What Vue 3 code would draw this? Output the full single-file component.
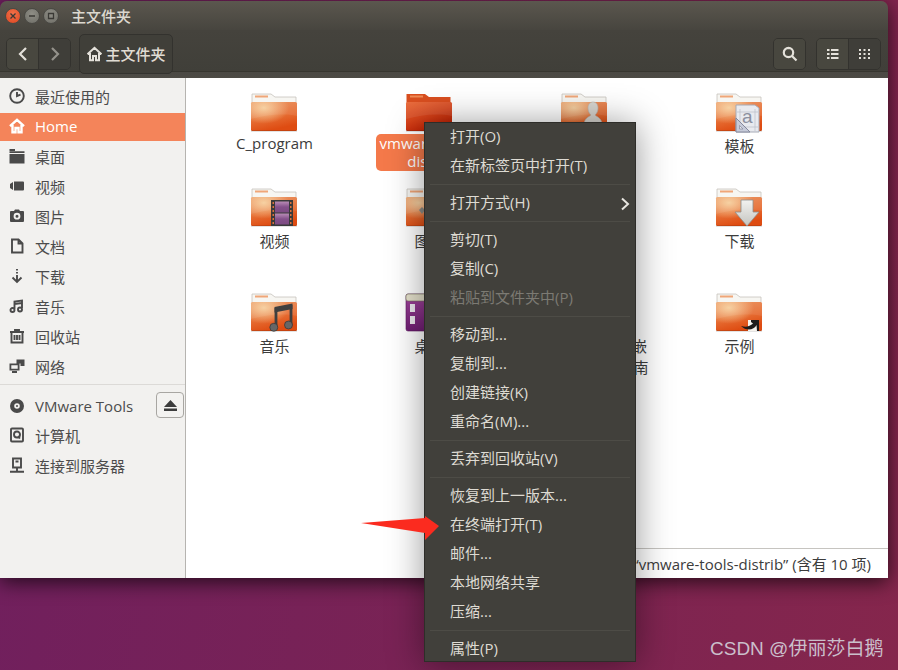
<script setup>
const sideTop = [
  { n: '最近使用的', s: 'M8 1.2a6.8 6.8 0 1 0 0 13.6 6.8 6.8 0 0 0 0-13.6z M8 4v4l3.5-1.4' },
  { n: 'Home', sel: true, s: 'M1 8.2 8 1.8l7 6.4 M3.5 7v7.2h3V10h3v4.2h3V7' },
  { n: '桌面', f: 'M0.5 1H6V3H0.5z M6 3.2H15.5V5H0.5V3.2z M0.5 6H15.5V15.5H0.5z' },
  { n: '视频', f: 'M1 6 4 4v8L1 10z M5 3.5h9a1 1 0 0 1 1 1v7a1 1 0 0 1-1 1H5z' },
  { n: '图片', f: 'M5 3 6 1.5h4L11 3h3a1 1 0 0 1 1 1v9a1 1 0 0 1-1 1H2a1 1 0 0 1-1-1V4a1 1 0 0 1 1-1z M8 4.8a3.4 3.4 0 1 0 0 6.8 3.4 3.4 0 0 0 0-6.8z M8 6.7a1.5 1.5 0 1 1 0 3 1.5 1.5 0 0 1 0-3z' },
  { n: '文档', s: 'M3 1.5h6.5L13.500 5.500v9H3z M9.500 1.500v4h4' },
  { n: '下载', s: 'M8 1v1.5M8 4v1.500M8 7v6 M3.500 9.500 8 14l4.500-4.500' },
  { n: '音乐', s: 'M5.500 11V3.500L13 2.500V10 M3.500 10a2 2 0 1 0 0 4 2 2 0 0 0 0-4z M11 9.500a2 2 0 1 0 0 4 2 2 0 0 0 0-4z M5.500 6 13 5' },
  { n: '回收站', s: 'M1 4h14 M6 4V2h4v2 M2.500 4v10.500h11V4 M5.500 7v5M8 7v5M10.500 7v5' },
  { n: '网络', f: 'M0.500 5.500h10v7h-10z M2.300 7.200v3.600h6.400V7.200z M3 13h5v2H3z M7.500 1.500h8v6.500h-4V5.500h-4z' }
]
const sideBottom = [
  { n: 'VMware Tools', eject: true, f: 'M8 1a7 7 0 1 0 0 14A7 7 0 0 0 8 1z M8 5.200a2.800 2.800 0 1 1 0 5.600 2.800 2.800 0 0 1 0-5.600z M8 7a1 1 0 1 0 0 2 1 1 0 0 0 0-2z' },
  { n: '计算机', s: 'M3 1.500h10a1 1 0 0 1 1 1v11a1 1 0 0 1-1 1H3a1 1 0 0 1-1-1v-11a1 1 0 0 1 1-1z M8 4.500a3 3 0 1 0 0 6 3 3 0 0 0 0-6z M9 9l2 2.500' },
  { n: '连接到服务器', s: 'M4 1.500h8v9H4z M8 11v3 M1 14.700h14 M6.500 4.500h3' }
]
const files = [
  { n: 'C_program', latin: true },
  { n: 'vmware-tools-', n2: 'distrib', sel: true },
  { n: '公共的', o: 'person' },
  { n: '模板', o: 'template' },
  { n: '视频', o: 'film' },
  { n: '图片', o: 'picture' },
  { n: '文档', o: 'doc' },
  { n: '下载', o: 'download' },
  { n: '音乐', o: 'music' },
  { n: '桌面', o: 'desk' },
  { n: '正点原子I.MX6U嵌', n2: '入式Linux开发指南' },
  { n: '示例', o: 'link' }
]
const menu = [
  ['打开(O)', '在新标签页中打开(T)'],
  [{ t: '打开方式(H)', more: true }],
  ['剪切(T)', '复制(C)', { t: '粘贴到文件夹中(P)', off: true }],
  ['移动到...', '复制到...', '创建链接(K)', '重命名(M)...'],
  ['丢弃到回收站(V)'],
  ['恢复到上一版本...', '在终端打开(T)', '邮件...', '本地网络共享', '压缩...'],
  ['属性(P)']
]
const label = (i) => (typeof i === 'string' ? i : i.t)
</script>

<template>
  <div class="desktop">
    <svg class="defs" width="0" height="0">
      <defs>
        <linearGradient id="front" x1="0" y1="0" x2="0.35" y2="1">
          <stop offset="0" stop-color="#ea8f58" />
          <stop offset="0.6" stop-color="#e66d33" />
          <stop offset="1" stop-color="#de4c12" />
        </linearGradient>
        <radialGradient id="glow" cx="0.28" cy="0.2" r="0.55">
          <stop offset="0" stop-color="#f8d6a4" stop-opacity="0.9" />
          <stop offset="1" stop-color="#f8d6a4" stop-opacity="0" />
        </radialGradient>
        <linearGradient id="frontSel" x1="0" y1="0" x2="0.5" y2="1">
          <stop offset="0" stop-color="#e8622e" />
          <stop offset="0.55" stop-color="#d8431a" />
          <stop offset="1" stop-color="#c22204" />
        </linearGradient>
        <linearGradient id="purple" x1="0" y1="0" x2="0" y2="1">
          <stop offset="0" stop-color="#a2459d" />
          <stop offset="1" stop-color="#6f1e73" />
        </linearGradient>
        <linearGradient id="film" x1="0" y1="0" x2="0" y2="1">
          <stop offset="0" stop-color="#b98cb6" />
          <stop offset="0.5" stop-color="#84508a" />
          <stop offset="1" stop-color="#7c4a82" />
        </linearGradient>
        <linearGradient id="arrow" x1="0" y1="0" x2="0" y2="1">
          <stop offset="0" stop-color="#f2f2f0" />
          <stop offset="1" stop-color="#c4c4c0" />
        </linearGradient>
      </defs>
    </svg>

    <div class="window">
      <header class="titlebar">
        <span class="wbtn close"><svg viewBox="0 0 8 8"><path d="M1.500 1.500l5 5M6.500 1.500l-5 5" /></svg></span>
        <span class="wbtn"><svg viewBox="0 0 8 8"><path d="M1 4h6" /></svg></span>
        <span class="wbtn"><svg viewBox="0 0 8 8"><path d="M1.500 1.500h5v5h-5z" /></svg></span>
        <span class="title">主文件夹</span>
      </header>

      <div class="toolbar">
        <div class="group nav">
          <span class="seg"><svg width="12" height="16" viewBox="0 0 12 16"><path class="chev" d="M9 2 3 8l6 6" /></svg></span>
          <span class="seg pressed"><svg width="12" height="16" viewBox="0 0 12 16"><path class="chev dim" d="M3 2l6 6-6 6" /></svg></span>
        </div>
        <div class="path">
          <svg width="17" height="16" viewBox="0 0 16 16"><path class="chev thin" d="M1 8.200 8 1.800l7 6.400 M3.500 7v7.200h3V10h3v4.200h3V7" /></svg>
          <span>主文件夹</span>
        </div>
        <div class="spacer"></div>
        <div class="group search">
          <span class="seg"><svg width="16" height="16" viewBox="0 0 16 16"><path class="chev" d="M6.500 1.800a4.700 4.700 0 1 0 0 9.400 4.700 4.700 0 0 0 0-9.400z M10 10l4.500 4.500" /></svg></span>
        </div>
        <div class="group views">
          <span class="seg"><svg width="12" height="12" viewBox="0 0 12 12"><path class="solid" d="M0 1h2.500v2H0z M4 1h7.500v2H4z M0 5h2.500v2H0z M4 5h7.500v2H4z M0 9h2.500v2H0z M4 9h7.500v2H4z" /></svg></span>
          <span class="seg pressed"><svg width="12" height="12" viewBox="0 0 12 12"><path class="solid" d="M0 1h2v2H0zM4.500 1h2v2h-2zM9 1h2v2H9zM0 5h2v2H0zM4.500 5h2v2h-2zM9 5h2v2H9zM0 9h2v2H0zM4.500 9h2v2h-2zM9 9h2v2H9z" /></svg></span>
        </div>
      </div>

      <div class="body">
        <aside class="sidebar">
          <div v-for="it in sideTop" :key="it.n" class="side-item" :class="{ selected: it.sel }">
            <svg class="side-ico" width="16" height="16" viewBox="0 0 16 16">
              <path v-if="it.f" class="ifill" fill-rule="evenodd" :d="it.f" />
              <path v-if="it.s" class="istroke" :d="it.s" />
            </svg>
            <span>{{ it.n }}</span>
          </div>
          <div class="side-sep"></div>
          <div v-for="it in sideBottom" :key="it.n" class="side-item" :class="{ device: it.eject }">
            <svg class="side-ico" width="16" height="16" viewBox="0 0 16 16">
              <path v-if="it.f" class="ifill" fill-rule="evenodd" :d="it.f" />
              <path v-if="it.s" class="istroke" :d="it.s" />
            </svg>
            <span>{{ it.n }}</span>
            <button v-if="it.eject" class="eject">
              <svg width="13" height="11" viewBox="0 0 13 11"><path d="M6.500 0 13 7H0z M0 8.500h13V11H0z" fill="#3c3c3c" /></svg>
            </button>
          </div>
        </aside>

        <main class="main">
          <div class="grid">
            <div v-for="f in files" :key="f.n" class="file">
              <svg class="folder" width="48" height="40" viewBox="0 0 48 40">
                <template v-if="f.o === 'desk'">
                  <rect x="1" y="1" width="46" height="37" rx="2" fill="url(#purple)" stroke="#5a1a5e" stroke-width="0.6" />
                  <rect x="1" y="1" width="46" height="7" rx="2" fill="#e5e1cc" stroke="#77755d" stroke-width="0.6" />
                  <rect x="5" y="11" width="5" height="8" fill="#eeeaf0" />
                  <rect x="5" y="23" width="5" height="8" fill="#eeeaf0" />
                </template>
                <template v-else>
                  <path v-if="f.sel" d="M1.500 1H20l4 3h21.500v6H1.500z" fill="#d94e1f" />
                  <path v-else d="M2 1h19l4 3h21v6H2z" fill="#f7f6f2" stroke="#c6c3bd" stroke-width="0.8" />
                  <rect x="5" y="2.500" width="13" height="2" :fill="f.sel ? '#f08a55' : '#f0a678'" />
                  <rect x="1" y="9" width="46" height="29" rx="1.500" :fill="f.sel ? 'url(#frontSel)' : 'url(#front)'" />
                  <rect v-if="!f.sel" x="1" y="9" width="46" height="29" rx="1.500" fill="url(#glow)" />
                  <path d="M1 9h46v14c-15-3-31-1-46 3z" fill="#fff" opacity="0.08" />
                  <rect x="1" y="37.500" width="46" height="1" fill="#000" opacity="0.22" />

                  <g v-if="f.o === 'person'">
                    <path d="M24 32c0-7 5-8 7-10-2-2-3-4-3-7 0-4 2.500-6 5-6s5 2 5 6c0 3-1 5-3 7 2 2 7 3 7 10z" fill="#d8d6d0" stroke="#b8b6b0" stroke-width="0.6" />
                  </g>
                  <g v-if="f.o === 'template'">
                    <path d="M23 12h17l4 3v24H21V12z" fill="#e8eaef" stroke="#a6aab6" />
                    <path d="M25 16v22M40 16v22M22 19h21M22 34h21" fill="none" stroke="#b9bdc9" stroke-width="0.7" />
                    <path d="M21 25l14 14H21z" fill="#c7cbd9" stroke="#84889c" />
                    <path d="M24.500 32.500v3.500h3.500z" fill="#e8eaef" stroke="#84889c" stroke-width="0.7" />
                    <text x="27" y="30" class="glyph">a</text>
                  </g>
                  <g v-if="f.o === 'film'">
                    <rect x="21" y="12" width="22" height="26" fill="#3a3a3a" />
                    <rect x="25" y="13.500" width="14" height="11" fill="url(#film)" />
                    <rect x="25" y="25.500" width="14" height="11" fill="url(#film)" />
                    <path d="M22.500 14h1.500v2h-1.500zM22.500 18h1.500v2h-1.500zM22.500 22h1.500v2h-1.500zM22.500 26h1.500v2h-1.500zM22.500 30h1.500v2h-1.500zM22.500 34h1.500v2h-1.500zM40 14h1.500v2H40zM40 18h1.500v2H40zM40 22h1.500v2H40zM40 26h1.500v2H40zM40 30h1.500v2H40zM40 34h1.500v2H40z" fill="#d9703c" />
                  </g>
                  <g v-if="f.o === 'picture'">
                    <path d="M14 22l3-3 3 3-3 4z" fill="#8b8a86" />
                  </g>
                  <g v-if="f.o === 'download'">
                    <path d="M26 12h12v12h6L32 38 20 24h6z" fill="url(#arrow)" stroke="#8e8e8c" stroke-width="0.8" />
                  </g>
                  <g v-if="f.o === 'music'">
                    <path d="M26 34V15M41 32V12" fill="none" stroke="#3f3f3f" stroke-width="2.800" />
                    <path d="M24.500 14l18-3.500v5.500l-18 3.500z" fill="#3f3f3f" />
                    <circle cx="23.800" cy="34.300" r="4" fill="#666" stroke="#333" stroke-width="0.7" />
                    <circle cx="38.500" cy="32" r="4" fill="#666" stroke="#333" stroke-width="0.7" />
                  </g>
                  <g v-if="f.o === 'link'">
                    <path d="M33 27h11v11h-11z" fill="#f6f3ee" />
                    <path d="M36 27h8v11h-2l-.5-6c-2.500 5-10 6.500-15.500 1 5 1.500 9 .5 12-2.500L36 29z" fill="#1e1c1c" />
                  </g>
                </template>
              </svg>
              <div class="fname" :class="{ chosen: f.sel, latin: f.latin }">
                {{ f.n }}<template v-if="f.n2"><br />{{ f.n2 }}</template>
              </div>
            </div>
          </div>
          <div class="status">“vmware-tools-distrib” (含有 10 项)</div>
        </main>
      </div>
    </div>

    <div class="ctx">
      <template v-for="(sec, i) in menu" :key="i">
        <div v-if="i" class="ctx-sep"></div>
        <div
          v-for="it in sec"
          :key="label(it)"
          class="ctx-item"
          :class="{ off: it.off }"
        >
          <span>{{ label(it) }}</span>
          <svg v-if="it.more" width="10" height="14" viewBox="0 0 10 14"><path d="M2 1.500 8 7l-6 5.500" class="more" /></svg>
        </div>
      </template>
    </div>

    <svg class="red-arrow" width="80" height="26" viewBox="0 0 80 26"><path d="M0 7 64 2 64 0 78 10 64 24 64 17z" fill="#fb2b1f" /></svg>
    <div class="mark">CSDN @伊丽莎白鹅</div>
  </div>
</template>

<style>
html, body { margin: 0; background: #6d1f5e; }
</style>

<style scoped>
.desktop {
  position: relative;
  width: 898px;
  height: 670px;
  overflow: hidden;
  padding-top: 1px;
  box-sizing: border-box;
  background: linear-gradient(100deg, #6f1f5f 0%, #7a2354 55%, #85264c 100%);
  font-family: "Open Sans", "Noto Sans CJK SC", sans-serif;
  font-size: 15px;
}
.defs { position: absolute; }
.window {
  width: 888px;
  height: 577px;
  display: flex;
  flex-direction: column;
  border-radius: 7px 7px 0 0;
  box-shadow: 0 4px 20px rgba(0, 0, 0, 0.7);
  overflow: hidden;
}
.titlebar {
  height: 29px;
  flex: none;
  display: flex;
  align-items: center;
  gap: 3px;
  padding-left: 5px;
  background: linear-gradient(#5b574e, #47453f);
}
.wbtn {
  width: 16px;
  height: 16px;
  border-radius: 50%;
  background: radial-gradient(circle at 50% 35%, #8f8e86, #6e6d66);
  border: 1px solid #4a4944;
  box-sizing: border-box;
  display: flex;
  align-items: center;
  justify-content: center;
}
.wbtn svg { width: 8px; height: 8px; fill: none; stroke: #3a3935; stroke-width: 1.300; }
.wbtn.close { background: radial-gradient(circle at 50% 35%, #f2724a, #dc4520); }
.title {
  margin-left: 9px;
  color: #dcd8cf;
  font-size: 15px;
  font-weight: 500;
}
.toolbar {
  height: 48px;
  flex: none;
  box-sizing: border-box;
  padding: 4px 7px 5px 6px;
  display: flex;
  align-items: center;
  background: linear-gradient(#45433d 0, #403f39 41px, #37362f 41px, #37362f 42px, #4b4944 42px, #4d4b45 100%);
}
.group {
  display: flex;
  height: 32px;
  border: 1px solid #33322e;
  border-radius: 5px;
  box-sizing: border-box;
  overflow: hidden;
}
.seg {
  flex: 1;
  display: flex;
  align-items: center;
  justify-content: center;
  background: #48473f;
}
.seg + .seg { border-left: 1px solid #33322e; }
.seg.pressed { background: #3f3e39; }
.nav { width: 65px; }
.search { width: 33px; }
.views { width: 65px; margin-left: 10px; }
.path {
  height: 40px;
  width: 94px;
  margin-left: 8px;
  box-sizing: border-box;
  border: 1px solid #33322e;
  border-radius: 5px;
  background: #403f39;
  color: #e0dcd3;
  font-size: 15px;
  font-weight: 500;
  display: flex;
  align-items: center;
  justify-content: center;
  gap: 2px;
}
.spacer { flex: 1; }
.chev { fill: none; stroke: #e4e1da; stroke-width: 2.200; }
.chev.dim { stroke: #94928b; }
.chev.thin { stroke-width: 2; }
.solid { fill: #e4e1da; }

.body { flex: 1; display: flex; min-height: 0; }
.sidebar {
  width: 186px;
  flex: none;
  box-sizing: border-box;
  padding-top: 5px;
  background: #f2f1ef;
  border-right: 1px solid #b6b4b0;
  color: #4c4c4c;
}
.side-item {
  height: 28px;
  margin-bottom: 2px;
  box-sizing: border-box;
  padding: 0 0 2px 9px;
  display: flex;
  align-items: center;
  gap: 10px;
  position: relative;
}
.side-item.device { padding-bottom: 0; }
.side-item.selected { background: #f4845a; color: #fff; }
.side-ico { flex: none; }
.ifill { fill: #4a4a4a; }
.istroke { fill: none; stroke: #4a4a4a; stroke-width: 1.900; }
.selected .istroke { stroke: #fff; stroke-width: 2.400; }
.side-sep { height: 1px; margin: 3px 0 7px; background: #dcdad7; }
.eject {
  position: absolute;
  right: 1px;
  top: 0;
  width: 28px;
  height: 26px;
  padding: 0;
  border: 1px solid #a8a6a2;
  border-radius: 4px;
  background: #f3f2f0;
  display: flex;
  align-items: center;
  justify-content: center;
}

.main { flex: 1; position: relative; background: #fff; min-width: 0; }
.grid {
  display: grid;
  grid-template-columns: repeat(4, 155px);
  grid-template-rows: 95px 105px 105px;
  padding: 15px 0 0 10px;
}
.file { display: flex; flex-direction: column; align-items: center; }
.folder { flex: none; }
.fname {
  margin-top: 2px;
  padding: 0 4px 0 6px;
  text-align: center;
  color: #3c3c3c;
  white-space: nowrap;
}
.fname.latin { margin-top: 0; }
.fname.chosen {
  width: 108px;
  box-sizing: border-box;
  margin: 1px 0 0 2px;
  padding: 0 4px 1px;
  line-height: 18px;
  background: #f4794a;
  color: #fff;
  border-radius: 5px;
}
.status {
  position: absolute;
  right: 0;
  bottom: 0;
  width: 290px;
  height: 30px;
  box-sizing: border-box;
  border-top: 1px solid #c6c4c0;
  background: #fff;
  color: #3c3c3c;
  text-align: right;
  padding: 4px 17px 0 0;
  line-height: 22px;
}

.ctx {
  position: absolute;
  left: 424px;
  top: 122px;
  width: 212px;
  height: 540px;
  overflow: hidden;
  box-sizing: border-box;
  background: #41403b;
  border: 1px solid #2e2d29;
  box-shadow: 0 2px 34px rgba(0, 0, 0, 0.42);
  color: #dedbd3;
}
.ctx-item {
  height: 29px;
  box-sizing: border-box;
  padding: 0 5px 4px 25px;
  display: flex;
  align-items: center;
  justify-content: space-between;
}
.ctx-item svg { margin-top: 4px; }
.ctx-item.off { color: #7c7a73; }
.ctx-sep { height: 1px; margin: 3px 5px 4px; background: #4d4c46; }
.more { fill: none; stroke: #e8e6e0; stroke-width: 2; }
.red-arrow { position: absolute; left: 361px; top: 516px; }
.mark {
  position: absolute;
  left: 710px;
  top: 637px;
  color: #cbbfcb;
  font-size: 19px;
  font-family: "Liberation Sans", "Noto Sans CJK SC", sans-serif;
  line-height: 24px;
}
.glyph { font-size: 19px; fill: #8c90a0; font-family: "Liberation Sans", sans-serif; }
</style>
